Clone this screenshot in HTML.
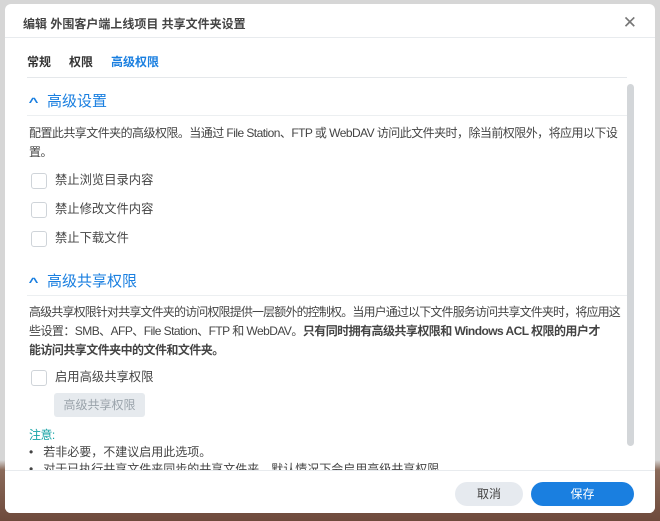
<!DOCTYPE html>
<html><head><meta charset="utf-8"><style>
*{box-sizing:border-box;margin:0;padding:0}
body{width:660px;height:521px;overflow:hidden;position:relative;font-family:"Liberation Sans","Noto Sans CJK SC",sans-serif;background:linear-gradient(#d6d6d6 0,#d6d6d6 460px,#8a6a5a 470px,#6e4a3c 521px);}
.dlg{position:absolute;left:5px;top:4px;width:650px;height:509px;background:#fff;border-radius:6px;overflow:hidden;}
.hd{height:34px;border-bottom:1px solid #e8ebee;font-size:12px;font-weight:bold;color:#444;padding:11px 0 0 18px;}
.x{position:absolute;right:18px;top:9px;font-size:17px;color:#777;}
.tabs{position:absolute;left:22px;top:49px;right:28px;height:25px;border-bottom:1px solid #e5e8eb;font-size:12px;font-weight:bold;color:#333;}
.tabs span{margin-right:18px}
.tabs .on{color:#1a7fe0}
.sec{position:absolute;left:25px;font-size:15px;color:#1a7fe0;}
.sec i{font-style:normal;font-size:12px;font-weight:bold;margin-right:10px;display:inline-block;transform:scaleX(1.4)}
.line{position:absolute;left:22px;right:28px;height:1px;background:#eceff1}
.p{position:absolute;left:24px;width:610px;font-size:12px;color:#444;line-height:19px;white-space:nowrap;letter-spacing:-0.55px}
.cb{position:absolute;left:26px;font-size:12.3px;color:#444;}
.cb b{display:inline-block;width:16px;height:16px;border:1px solid #cfd4d9;border-radius:3px;vertical-align:middle;margin-right:8px}
.btn{position:absolute;left:49px;top:389px;width:91px;height:24px;background:#e6eaee;border-radius:3px;color:#9aa3ab;font-size:12px;text-align:center;line-height:24px}
.sb{position:absolute;left:622px;top:80px;width:7px;height:362px;background:#d3d6d9;border-radius:4px}
.ft{position:absolute;left:0;top:466px;width:650px;height:1px;background:#e8ebee}
.b1{position:absolute;left:450px;top:478px;width:68px;height:24px;border-radius:12px;background:#e6eaef;color:#444;font-size:12px;text-align:center;line-height:24px}
.b2{position:absolute;left:526px;top:478px;width:103px;height:24px;border-radius:12px;background:#1a7fe0;color:#fff;font-size:12px;text-align:center;line-height:24px}
</style></head><body><div class="dlg">
<div class="hd">编辑 外围客户端上线项目 共享文件夹设置</div><div class="x">✕</div>
<div class="tabs"><span>常规</span><span>权限</span><span class="on">高级权限</span></div>
<div class="sec" style="top:86px"><i>^</i>高级设置</div>
<div class="line" style="top:111px"></div>
<div class="p" style="top:120px">配置此共享文件夹的高级权限。当通过 File Station、FTP 或 WebDAV 访问此文件夹时，除当前权限外，将应用以下设<br>置。</div>
<div class="cb" style="top:166px"><b></b>禁止浏览目录内容</div>
<div class="cb" style="top:195px"><b></b>禁止修改文件内容</div>
<div class="cb" style="top:224px"><b></b>禁止下载文件</div>
<div class="sec" style="top:266px"><i>^</i>高级共享权限</div>
<div class="line" style="top:291px"></div>
<div class="p" style="top:299px"><span style="letter-spacing:-0.85px">高级共享权限针对共享文件夹的访问权限提供一层额外的控制权。当用户通过以下文件服务访问共享文件夹时，将应用这</span><br>些设置：SMB、AFP、File Station、FTP 和 WebDAV。<b>只有同时拥有高级共享权限和 Windows ACL 权限的用户才</b><br><b>能访问共享文件夹中的文件和文件夹。</b></div>
<div class="cb" style="top:363px"><b></b>启用高级共享权限</div>
<div class="btn">高级共享权限</div>
<div class="p" style="top:422px;color:#17a3a6">注意:</div>
<div class="p" style="top:439px;letter-spacing:0">•&nbsp;&nbsp; 若非必要，不建议启用此选项。</div>
<div class="p" style="top:456px;letter-spacing:0">•&nbsp;&nbsp; 对于已执行共享文件夹同步的共享文件夹，默认情况下会启用高级共享权限。</div>
<div class="sb"></div>
<div class="ft" style="background:#fff;top:467px;height:42px"></div>
<div class="ft"></div>
<div class="b1">取消</div><div class="b2">保存</div>
</div></body></html>
